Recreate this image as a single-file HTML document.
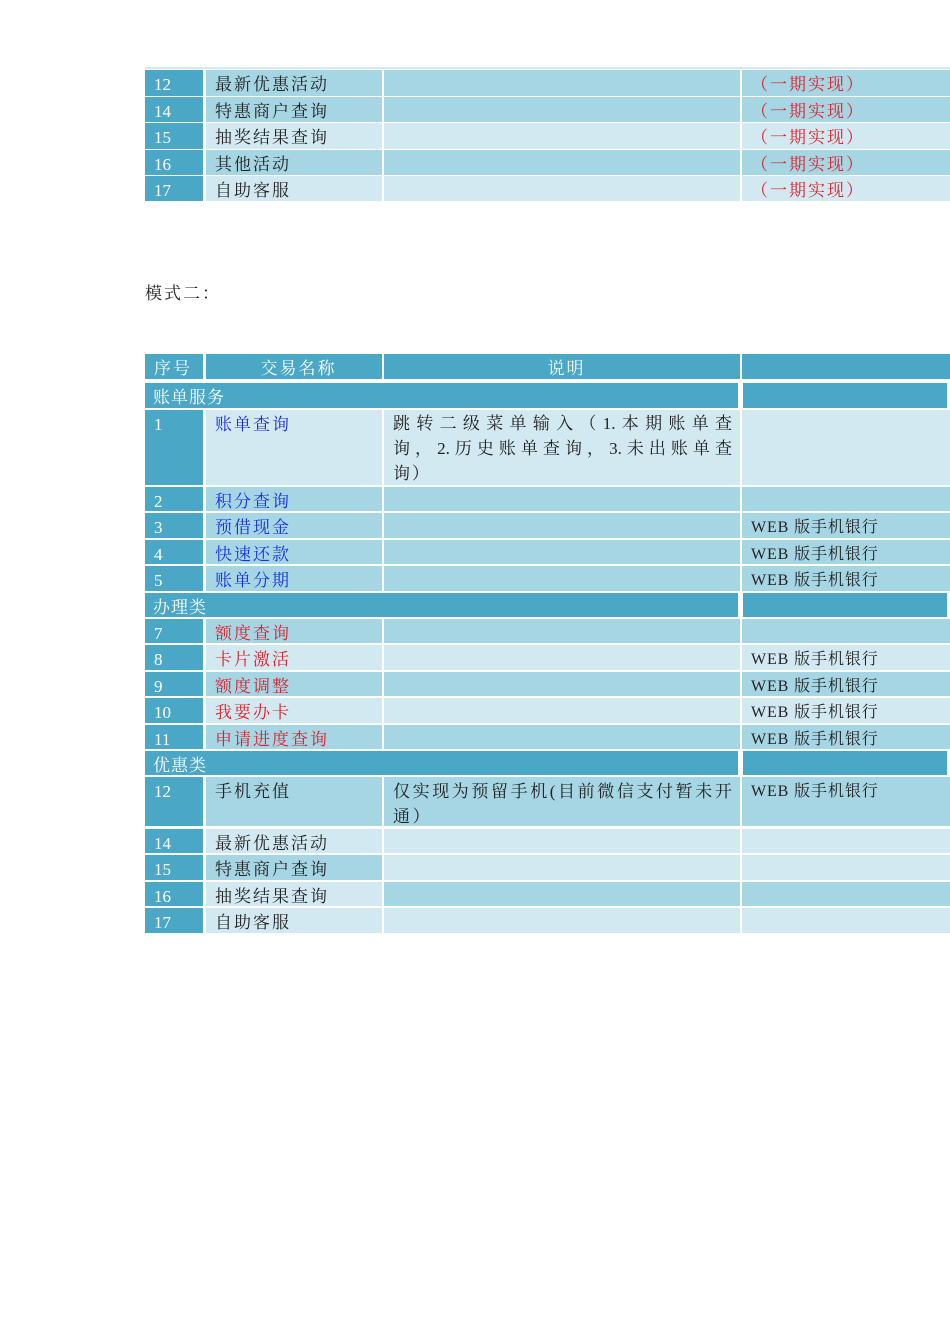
<!DOCTYPE html><html><head><meta charset="utf-8"><style>
body{margin:0;width:950px;height:1344px;background:#fff;position:relative;overflow:hidden;font-family:"Liberation Serif","Noto Serif CJK SC",serif;}
.c{position:absolute;box-sizing:border-box;padding-left:9px;padding-top:2px;font-size:17px;line-height:26px;letter-spacing:2px;color:#222;white-space:nowrap;overflow:hidden}
.D{background:#4aa8c6;color:#fff;letter-spacing:0}.M{background:#a6d5e3}.L{background:#d3e9f1}
.b{color:#1a2fe0}.r{color:#e0202a}
.W{font-size:16px;letter-spacing:0.9px}
.j{text-align:justify;text-align-last:justify;height:25px;line-height:25px;letter-spacing:0;white-space:normal;word-break:break-all}
</style></head><body>
<div style="position:absolute;left:145px;top:67px;width:805px;height:2px;background:#d3e9f1"></div>
<div class="c D" style="left:145px;top:70px;width:58px;height:26px">12</div><div class="c M" style="left:206px;top:70px;width:176px;height:26px">最新优惠活动</div><div class="c M" style="left:384px;top:70px;width:356px;height:26px"></div><div class="c M r" style="left:742px;top:70px;width:208px;height:26px">（一期实现）</div>
<div class="c D" style="left:145px;top:97px;width:58px;height:25px">14</div><div class="c M" style="left:206px;top:97px;width:176px;height:25px">特惠商户查询</div><div class="c M" style="left:384px;top:97px;width:356px;height:25px"></div><div class="c M r" style="left:742px;top:97px;width:208px;height:25px">（一期实现）</div>
<div class="c D" style="left:145px;top:123px;width:58px;height:26px">15</div><div class="c L" style="left:206px;top:123px;width:176px;height:26px">抽奖结果查询</div><div class="c L" style="left:384px;top:123px;width:356px;height:26px"></div><div class="c L r" style="left:742px;top:123px;width:208px;height:26px">（一期实现）</div>
<div class="c D" style="left:145px;top:150px;width:58px;height:25px">16</div><div class="c M" style="left:206px;top:150px;width:176px;height:25px">其他活动</div><div class="c M" style="left:384px;top:150px;width:356px;height:25px"></div><div class="c M r" style="left:742px;top:150px;width:208px;height:25px">（一期实现）</div>
<div class="c D" style="left:145px;top:176px;width:58px;height:25px">17</div><div class="c L" style="left:206px;top:176px;width:176px;height:25px">自助客服</div><div class="c L" style="left:384px;top:176px;width:356px;height:25px"></div><div class="c L r" style="left:742px;top:176px;width:208px;height:25px">（一期实现）</div>

<div class="c" style="left:136px;top:279px;width:200px;height:26px">模式二：</div>

<div class="c D" style="left:145px;top:354px;width:58px;height:25px;letter-spacing:2px">序号</div>
<div class="c D" style="left:206px;top:354px;width:176px;height:25px;text-align:center;letter-spacing:2px">交易名称</div>
<div class="c D" style="left:384px;top:354px;width:356px;height:25px;text-align:center;letter-spacing:2px">说明</div>
<div class="c D" style="left:742px;top:354px;width:208px;height:25px"></div>
<div class="c D" style="left:145px;top:383px;width:593px;height:25px;padding-left:8px;letter-spacing:1px">账单服务</div><div class="c D" style="left:743px;top:383px;width:204px;height:25px"></div>

<div class="c D" style="left:145px;top:410px;width:58px;height:75px">1</div>
<div class="c L b" style="left:206px;top:410px;width:176px;height:75px">账单查询</div>
<div class="c L" style="left:384px;top:410px;width:356px;height:75px;padding-right:8px;padding-top:1px">
<div class="j">跳转二级菜单输入（1.本期账单查</div>
<div class="j">询，2.历史账单查询，3.未出账单查</div>
<div style="height:25px;line-height:25px">询）</div></div>
<div class="c L" style="left:742px;top:410px;width:208px;height:75px"></div>

<div class="c D" style="left:145px;top:487px;width:58px;height:24px">2</div><div class="c M b" style="left:206px;top:487px;width:176px;height:24px">积分查询</div><div class="c M" style="left:384px;top:487px;width:356px;height:24px"></div><div class="c M" style="left:742px;top:487px;width:208px;height:24px"></div>
<div class="c D" style="left:145px;top:513px;width:58px;height:25px">3</div><div class="c M b" style="left:206px;top:513px;width:176px;height:25px">预借现金</div><div class="c M" style="left:384px;top:513px;width:356px;height:25px"></div><div class="c M W" style="left:742px;top:513px;width:208px;height:25px">WEB 版手机银行</div>
<div class="c D" style="left:145px;top:540px;width:58px;height:24px">4</div><div class="c M b" style="left:206px;top:540px;width:176px;height:24px">快速还款</div><div class="c M" style="left:384px;top:540px;width:356px;height:24px"></div><div class="c M W" style="left:742px;top:540px;width:208px;height:24px">WEB 版手机银行</div>
<div class="c D" style="left:145px;top:566px;width:58px;height:25px">5</div><div class="c M b" style="left:206px;top:566px;width:176px;height:25px">账单分期</div><div class="c M" style="left:384px;top:566px;width:356px;height:25px"></div><div class="c M W" style="left:742px;top:566px;width:208px;height:25px">WEB 版手机银行</div>

<div class="c D" style="left:145px;top:593px;width:593px;height:24px;padding-left:8px;letter-spacing:1px">办理类</div><div class="c D" style="left:743px;top:593px;width:204px;height:24px"></div>
<div class="c D" style="left:145px;top:619px;width:58px;height:24px">7</div><div class="c M r" style="left:206px;top:619px;width:176px;height:24px">额度查询</div><div class="c M" style="left:384px;top:619px;width:356px;height:24px"></div><div class="c M" style="left:742px;top:619px;width:208px;height:24px"></div>
<div class="c D" style="left:145px;top:645px;width:58px;height:25px">8</div><div class="c L r" style="left:206px;top:645px;width:176px;height:25px">卡片激活</div><div class="c L" style="left:384px;top:645px;width:356px;height:25px"></div><div class="c L W" style="left:742px;top:645px;width:208px;height:25px">WEB 版手机银行</div>
<div class="c D" style="left:145px;top:672px;width:58px;height:24px">9</div><div class="c M r" style="left:206px;top:672px;width:176px;height:24px">额度调整</div><div class="c M" style="left:384px;top:672px;width:356px;height:24px"></div><div class="c M W" style="left:742px;top:672px;width:208px;height:24px">WEB 版手机银行</div>
<div class="c D" style="left:145px;top:698px;width:58px;height:25px">10</div><div class="c L r" style="left:206px;top:698px;width:176px;height:25px">我要办卡</div><div class="c L" style="left:384px;top:698px;width:356px;height:25px"></div><div class="c L W" style="left:742px;top:698px;width:208px;height:25px">WEB 版手机银行</div>
<div class="c D" style="left:145px;top:725px;width:58px;height:24px">11</div><div class="c M r" style="left:206px;top:725px;width:176px;height:24px">申请进度查询</div><div class="c M" style="left:384px;top:725px;width:356px;height:24px"></div><div class="c M W" style="left:742px;top:725px;width:208px;height:24px">WEB 版手机银行</div>

<div class="c D" style="left:145px;top:751px;width:593px;height:24px;padding-left:8px;letter-spacing:1px">优惠类</div><div class="c D" style="left:743px;top:751px;width:204px;height:24px"></div>
<div class="c D" style="left:145px;top:777px;width:58px;height:49px">12</div><div class="c M" style="left:206px;top:777px;width:176px;height:49px">手机充值</div><div class="c M" style="left:384px;top:777px;width:356px;height:49px;white-space:normal;line-height:25px;letter-spacing:2.6px">仅实现为预留手机(目前微信支付暂未开通）</div><div class="c M W" style="left:742px;top:777px;width:208px;height:49px">WEB 版手机银行</div>
<div class="c D" style="left:145px;top:829px;width:58px;height:24px">14</div><div class="c L" style="left:206px;top:829px;width:176px;height:24px">最新优惠活动</div><div class="c L" style="left:384px;top:829px;width:356px;height:24px"></div><div class="c L" style="left:742px;top:829px;width:208px;height:24px"></div>
<div class="c D" style="left:145px;top:855px;width:58px;height:25px">15</div><div class="c M" style="left:206px;top:855px;width:176px;height:25px">特惠商户查询</div><div class="c L" style="left:384px;top:855px;width:356px;height:25px"></div><div class="c L" style="left:742px;top:855px;width:208px;height:25px"></div>
<div class="c D" style="left:145px;top:882px;width:58px;height:24px">16</div><div class="c L" style="left:206px;top:882px;width:176px;height:24px">抽奖结果查询</div><div class="c M" style="left:384px;top:882px;width:356px;height:24px"></div><div class="c M" style="left:742px;top:882px;width:208px;height:24px"></div>
<div class="c D" style="left:145px;top:908px;width:58px;height:25px">17</div><div class="c L" style="left:206px;top:908px;width:176px;height:25px">自助客服</div><div class="c L" style="left:384px;top:908px;width:356px;height:25px"></div><div class="c L" style="left:742px;top:908px;width:208px;height:25px"></div>
</body></html>
